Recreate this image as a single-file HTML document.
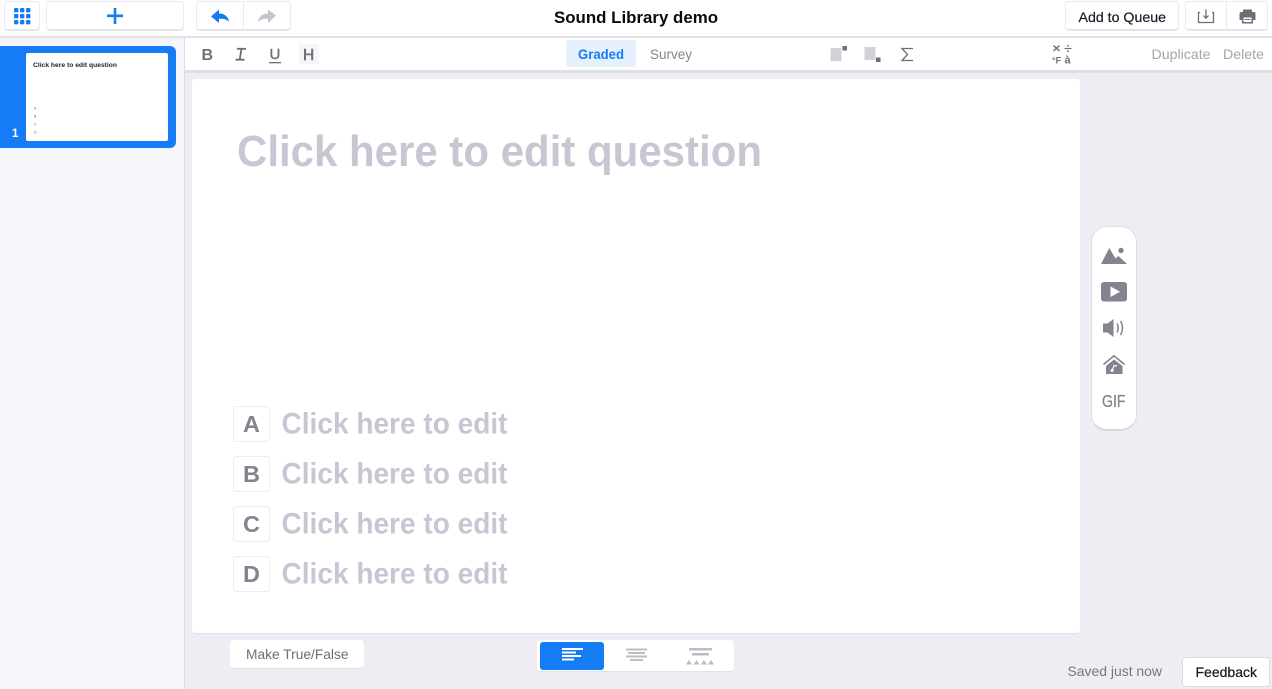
<!DOCTYPE html>
<html><head><meta charset="utf-8"><style>
html,body{margin:0;padding:0;background:#eeedf3}
body{width:1272px;height:689px;overflow:hidden;position:relative;font-family:"Liberation Sans",sans-serif}
.a{position:absolute;box-sizing:border-box}
.btn{background:#fff;border:1px solid #ebeaf1;border-bottom:2px solid #e5e4ec;border-radius:4px}
.opt{background:#fff;border:1px solid #edecf3;border-radius:3px;width:37px;height:36px;left:233px}
svg{position:absolute;left:0;top:0}
text{font-family:"Liberation Sans",sans-serif}
</style></head><body>
<div class="a" style="left:0;top:0;width:1272px;height:38px;background:#fff;border-bottom:2px solid #e2e1e9"></div>
<div class="a" style="left:0;top:38px;width:185px;height:651px;background:#f5f5fc;border-right:1px solid #dcdbe3"></div>
<div class="a" style="left:185px;top:38px;width:1087px;height:35px;background:#fff;border-bottom:3px solid #e0dfe7"></div>
<div class="a btn" style="left:4px;top:1px;width:36px;height:30px"></div>
<div class="a btn" style="left:46px;top:1px;width:138px;height:30px"></div>
<div class="a btn" style="left:196px;top:1px;width:48px;height:30px;border-radius:4px 0 0 4px"></div>
<div class="a btn" style="left:243px;top:1px;width:48px;height:30px;border-radius:0 4px 4px 0"></div>
<div class="a btn" style="left:1065px;top:1px;width:114px;height:30px"></div>
<div class="a btn" style="left:1185px;top:1px;width:42px;height:30px;border-radius:4px 0 0 4px"></div>
<div class="a btn" style="left:1226px;top:1px;width:42px;height:30px;border-radius:0 4px 4px 0"></div>
<div class="a" style="left:0;top:46px;width:176px;height:102px;background:#157cf5;border-radius:0 6px 6px 0"></div>
<div class="a" style="left:26px;top:53px;width:142px;height:88px;background:#fff;border-radius:2px"></div>
<div class="a" style="left:299px;top:44px;width:20px;height:20px;background:#f5f5fa"></div>
<div class="a" style="left:566px;top:40px;width:70px;height:27px;background:#e6f1fe;border-radius:3px"></div>
<div class="a" style="left:192px;top:79px;width:888px;height:555px;background:#fff;border-radius:4px;border-bottom:1px solid #e0dfe7"></div>
<div class="a opt" style="top:406px"></div>
<div class="a opt" style="top:456px"></div>
<div class="a opt" style="top:506px"></div>
<div class="a opt" style="top:556px"></div>
<div class="a" style="left:1091px;top:226px;width:46px;height:205px;background:#fff;border:1px solid #e0dfe7;border-bottom:2px solid #d9d8e0;border-radius:16px"></div>
<div class="a" style="left:230px;top:640px;width:134px;height:29px;background:#fff;border-radius:4px;border-bottom:1px solid #e3e2ea"></div>
<div class="a" style="left:537px;top:640px;width:197px;height:32px;background:#fff;border-radius:4px;border-bottom:1px solid #e3e2ea"></div>
<div class="a" style="left:540px;top:642px;width:64px;height:28px;background:#157cf5;border-radius:3px"></div>
<div class="a" style="left:1182px;top:657px;width:88px;height:30px;background:#fff;border:1px solid #dcdbe3;border-radius:4px"></div>

<svg width="1272" height="689" viewBox="0 0 1272 689" xmlns="http://www.w3.org/2000/svg">
<!-- grid icon -->
<g fill="#157cf5">
<rect x="14" y="8" width="4.400" height="4.400" rx="1"/><rect x="20" y="8" width="4.400" height="4.400" rx="1"/><rect x="26" y="8" width="4.400" height="4.400" rx="1"/>
<rect x="14" y="14" width="4.400" height="4.400" rx="1"/><rect x="20" y="14" width="4.400" height="4.400" rx="1"/><rect x="26" y="14" width="4.400" height="4.400" rx="1"/>
<rect x="14" y="20" width="4.400" height="4.400" rx="1"/><rect x="20" y="20" width="4.400" height="4.400" rx="1"/><rect x="26" y="20" width="4.400" height="4.400" rx="1"/>
<rect x="107" y="14.500" width="16" height="2.600"/><rect x="113.700" y="8" width="2.600" height="16"/>
</g>
<path d="M211 16.500L219 9.500V13.500C225 13.500 228.500 17 229 22C226.500 19 223.500 18.500 219 18.800V23Z" fill="#157cf5"/>
<path d="M276 15.500L268 9.500V13.500C262.500 13.500 258.500 17 258 22C261 19 264 18.500 268 18.800V23Z" fill="#c5c4cd"/>
<!-- download / print -->
<path d="M1200 12.500H1198.500V22.500H1213.500V12.500H1212" fill="none" stroke="#6f6e78" stroke-width="1.300"/>
<path d="M1206 9.500V18M1203.500 15.500L1206 18.300L1208.500 15.500" fill="none" stroke="#6f6e78" stroke-width="1.300"/>
<path d="M1243 9.500H1252V12H1254C1255 12 1255.500 12.800 1255.500 13.500V20H1253V23.500H1242V20H1239.500V13.500C1239.500 12.800 1240 12 1241 12H1243Z" fill="#6f6e78"/>
<rect x="1243.500" y="17.500" width="8" height="4.500" fill="#fff"/><rect x="1244.500" y="19" width="6" height="1" fill="#6f6e78"/>
<!-- title / header text -->
<text x="554" y="23" font-size="17" font-weight="700" fill="#0a0a14" textLength="164" lengthAdjust="spacingAndGlyphs">Sound Library demo</text>
<text x="1078.500" y="22" font-size="14" fill="#1a1a24" stroke="#1a1a24" stroke-width=".2" textLength="87.500" lengthAdjust="spacingAndGlyphs">Add to Queue</text>
<!-- thumbnail -->
<text x="12" y="137" font-size="11.500" font-weight="700" fill="#fff">1</text>
<text x="33" y="67" font-size="6.500" font-weight="700" fill="#222230" textLength="84" lengthAdjust="spacingAndGlyphs">Click here to edit question</text>
<g font-size="3.500" fill="#666672"><text x="34" y="109.500">A</text><text x="34" y="117.500">B</text><text x="34" y="125.500">C</text><text x="34" y="133.500">D</text></g>
<!-- format toolbar -->
<text x="201.500" y="60" font-size="16" font-weight="700" fill="#6f6e78">B</text>
<path d="M237 48.800H246M235.500 59.700H244.500M241.500 48.800L239.700 59.700" fill="none" stroke="#6f6e78" stroke-width="1.800"/>
<text x="269.500" y="59" font-size="15" fill="#6f6e78" stroke="#6f6e78" stroke-width=".4">U</text>
<rect x="269" y="62" width="12" height="1.300" fill="#6f6e78"/>
<text x="303" y="60" font-size="15.500" fill="#6f6e78" stroke="#6f6e78" stroke-width=".6">H</text>
<text x="578" y="59" font-size="14" font-weight="700" fill="#157cf5" textLength="46" lengthAdjust="spacingAndGlyphs">Graded</text>
<text x="650" y="59" font-size="14" fill="#85848e" textLength="42" lengthAdjust="spacingAndGlyphs">Survey</text>
<rect x="830.500" y="48" width="11" height="13" fill="#d3d2da"/><rect x="842.500" y="46" width="4.500" height="4.500" fill="#6f6e78"/>
<rect x="864.500" y="47" width="11" height="13" fill="#d3d2da"/><rect x="876" y="57.500" width="4.500" height="4.500" fill="#6f6e78"/>
<path d="M913 48.500H902L907.500 54.500L902 60.500H913" fill="none" stroke="#6f6e78" stroke-width="1.300"/>
<path d="M1053.500 45.500L1059.500 51M1059.500 45.500L1053.500 51" stroke="#6f6e78" stroke-width="1.400"/>
<path d="M1064.500 48.500H1071.500" stroke="#6f6e78" stroke-width="1.200"/><circle cx="1068" cy="45.800" r=".9" fill="#6f6e78"/><circle cx="1068" cy="51.200" r=".9" fill="#6f6e78"/>
<text x="1052" y="63.500" font-size="9" font-weight="700" fill="#6f6e78">°F</text>
<text x="1064.500" y="63.500" font-size="11" font-weight="700" fill="#6f6e78">à</text>
<text x="1151.500" y="59" font-size="14" fill="#a5a4ae" textLength="59" lengthAdjust="spacingAndGlyphs">Duplicate</text>
<text x="1223" y="59" font-size="14" fill="#a5a4ae" textLength="41" lengthAdjust="spacingAndGlyphs">Delete</text>
<!-- question -->
<text x="237" y="166" font-size="44" font-weight="700" fill="#c7c6d3" textLength="525" lengthAdjust="spacingAndGlyphs">Click here to edit question</text>
<g font-size="29.500" font-weight="700" fill="#c7c6d3">
<text x="281.500" y="433.500" textLength="226" lengthAdjust="spacingAndGlyphs">Click here to edit</text>
<text x="281.500" y="483.500" textLength="226" lengthAdjust="spacingAndGlyphs">Click here to edit</text>
<text x="281.500" y="533.500" textLength="226" lengthAdjust="spacingAndGlyphs">Click here to edit</text>
<text x="281.500" y="583.500" textLength="226" lengthAdjust="spacingAndGlyphs">Click here to edit</text>
</g>
<g font-size="23.500" font-weight="700" fill="#85838f" text-anchor="middle">
<text x="251.500" y="432">A</text><text x="251.500" y="482">B</text><text x="251.500" y="532">C</text><text x="251.500" y="582">D</text>
</g>
<!-- media panel -->
<g fill="#85838f">
<path d="M1101 264L1109.300 248L1115.500 258.500L1118.500 256L1127 264Z"/><circle cx="1121" cy="250.500" r="2.700"/>
<rect x="1101" y="282" width="26" height="19.500" rx="3"/>
<path d="M1103 323.500H1107.500L1113.500 319V337L1107.500 332.500H1103Z"/>
</g>
<path d="M1110.500 286.500L1120 291.700L1110.500 297Z" fill="#fff"/>
<path d="M1117 323.500C1118.500 326 1118.500 330 1117 332.500M1120.500 321C1123 325 1123 331 1120.500 335" fill="none" stroke="#85838f" stroke-width="1.500"/>
<path d="M1103.500 364.500L1114 355.800L1124.500 364.500" fill="none" stroke="#85838f" stroke-width="1.600"/>
<path d="M1106 366L1114 359.500L1122.500 366V374H1106Z" fill="#85838f"/>
<path d="M1112.500 370.500L1114 365.500L1117 366" fill="none" stroke="#fff" stroke-width="1.200"/><circle cx="1112" cy="370.500" r="1.500" fill="#fff"/>
<text x="1102" y="407" font-size="17.500" fill="#85838f" stroke="#85838f" stroke-width=".3" textLength="23.500" lengthAdjust="spacingAndGlyphs">GIF</text>
<!-- bottom -->
<text x="246" y="659" font-size="14" fill="#6f6e78" textLength="102.500" lengthAdjust="spacingAndGlyphs">Make True/False</text>
<g fill="#fff"><rect x="562" y="648" width="21" height="2"/><rect x="562" y="651.500" width="14" height="2"/><rect x="562" y="655" width="19" height="2"/><rect x="562" y="658.500" width="12" height="2"/></g>
<g fill="#bcbbc6"><rect x="626" y="648.500" width="21" height="2"/><rect x="628" y="652" width="17" height="2"/><rect x="626" y="655.500" width="21" height="2"/><rect x="630" y="659" width="13" height="2"/>
<rect x="689" y="648" width="23" height="2.500"/><rect x="692" y="653" width="17" height="2.500"/>
<path d="M686 664.500L689 660L692 664.500ZM693.500 664.500L696.500 660L699.500 664.500ZM701 664.500L704 660L707 664.500ZM708 664.500L711 660L714 664.500Z"/></g>
<text x="1067.500" y="676" font-size="14" fill="#77767f" textLength="94.500" lengthAdjust="spacingAndGlyphs">Saved just now</text>
<text x="1195.500" y="677" font-size="14" fill="#14141e" stroke="#14141e" stroke-width=".2" textLength="61.500" lengthAdjust="spacingAndGlyphs">Feedback</text>
</svg>
</body></html>
